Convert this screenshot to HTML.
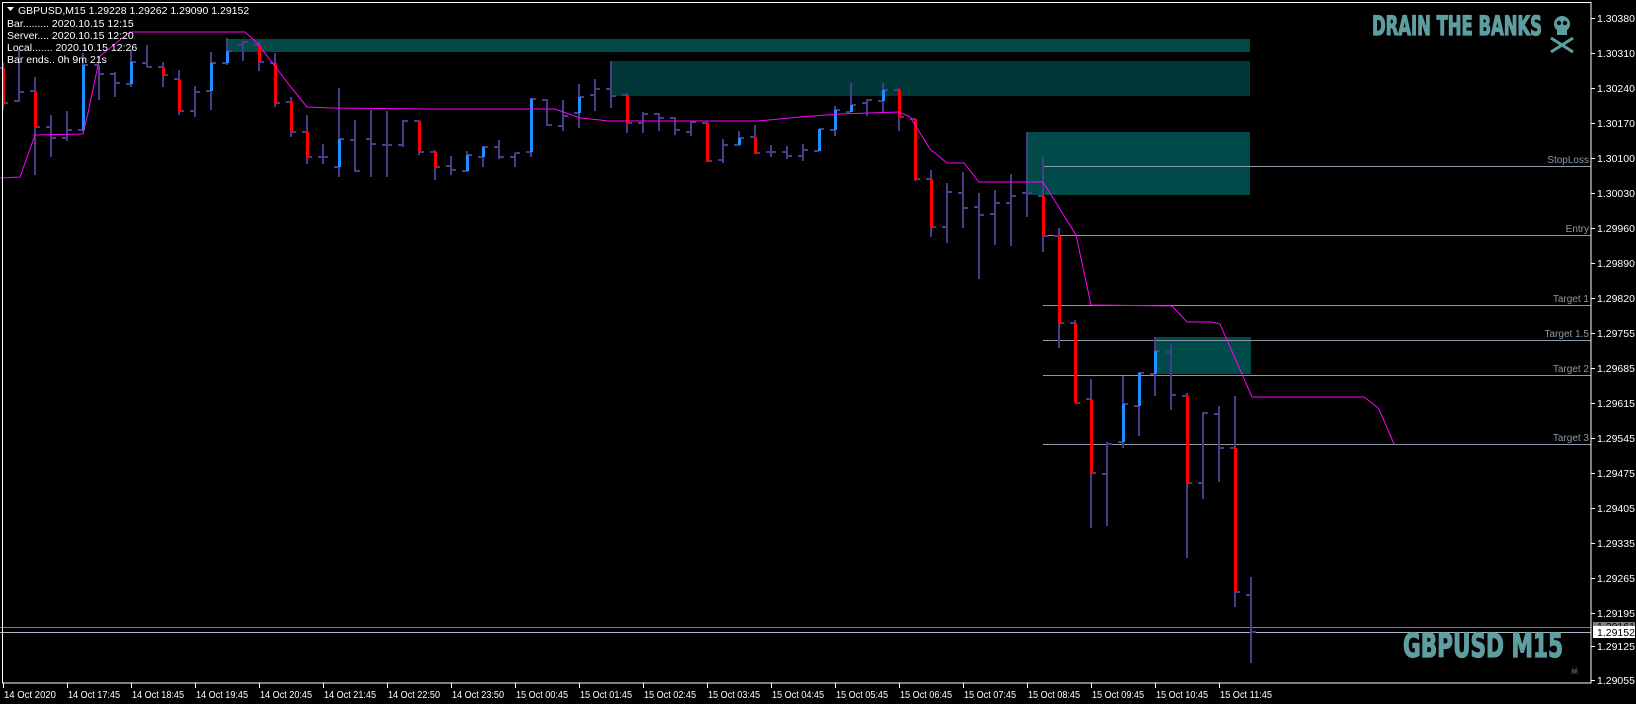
<!DOCTYPE html>
<html><head><meta charset="utf-8"><style>
html,body{margin:0;padding:0;background:#000;width:1636px;height:704px;overflow:hidden}
svg{display:block}
.t{font-family:"Liberation Sans",sans-serif;font-size:10.5px;fill:#fff}
.lb{font-family:"Liberation Sans",sans-serif;font-size:10px;fill:#8a98a8}
.big{font-family:"Liberation Sans Narrow","DejaVu Sans Condensed","Liberation Sans",sans-serif;font-weight:bold;fill:#5f9ea0;stroke:#5f9ea0;stroke-width:1.2}
</style></head><body>
<svg id="c" width="1636" height="704" xmlns="http://www.w3.org/2000/svg">
<rect width="1636" height="704" fill="#000"/>
<g id="boxes">
<rect x="227" y="39" width="1023" height="13" fill="#004a4a"/>
<rect x="611" y="61" width="639" height="35" fill="#003838"/>
<rect x="1027" y="132" width="223" height="63" fill="#004a4a"/>
<rect x="1155" y="337" width="96" height="37" fill="#004a4a"/>
</g>
<g stroke="#8c9aaa" stroke-width="1">
<line x1="1043" y1="166.5" x2="1591" y2="166.5"/>
<line x1="1043" y1="235.5" x2="1591" y2="235.5"/>
<line x1="1043" y1="305.5" x2="1591" y2="305.5"/>
<line x1="1043" y1="340.5" x2="1591" y2="340.5"/>
<line x1="1043" y1="375.5" x2="1591" y2="375.5"/>
<line x1="1043" y1="444.5" x2="1591" y2="444.5"/>
<line x1="0" y1="627.5" x2="1591" y2="627.5" stroke="#808080"/>
<line x1="0" y1="632.5" x2="1591" y2="632.5" stroke="#a8b8c8"/>
</g>
<g text-anchor="end" class="lb">
<text x="1589" y="163">StopLoss</text>
<text x="1589" y="232">Entry</text>
<text x="1589" y="302">Target 1</text>
<text x="1589" y="337">Target 1.5</text>
<text x="1589" y="372">Target 2</text>
<text x="1589" y="441">Target 3</text>
</g>
<g id="bars"></g>
<polyline fill="none" stroke="#ff00ff" stroke-width="1" points="0,178 20,177 35,135 83,134 88,113 100,56 130,32 245,32 258,44 290,86 307,107 332,108 428,109 555,109 580,118 600,120 608,121 758,121 800,117 840,114 899,112 910,117 930,149 947,163 964,163 979,182 1043,182 1076,235 1091,305 1172,306 1187,322 1212,322 1220,324 1252,397 1364,397 1372,403 1379,409 1394,444"/>
<rect x="2.5" y="2.5" width="1588.5" height="680.5" fill="none" stroke="#fff" stroke-width="1"/>
<g class="t">
<path d="M7 7h7l-3.5 4z" fill="#fff"/>
<text x="18" y="14">GBPUSD,M15  1.29228 1.29262 1.29090 1.29152</text>
<text x="7" y="27">Bar......... 2020.10.15 12:15</text>
<text x="7" y="39">Server.... 2020.10.15 12:20</text>
<text x="7" y="51">Local....... 2020.10.15 12:26</text>
<text x="7" y="63">Bar ends.. 0h 9m 21s</text>
</g>
<text class="big" x="1372" y="35" font-size="27" textLength="170" lengthAdjust="spacingAndGlyphs">DRAIN THE BANKS</text>
<g fill="#5f9ea0" stroke="#5f9ea0">
<ellipse cx="1562" cy="24" rx="8" ry="8" stroke="none"/>
<rect x="1557" y="28" width="10" height="7" stroke="none"/>
<circle cx="1559" cy="23" r="2.2" fill="#000" stroke="none"/>
<circle cx="1565" cy="23" r="2.2" fill="#000" stroke="none"/>
<line x1="1551" y1="38" x2="1573" y2="52" stroke-width="3"/>
<line x1="1573" y1="38" x2="1551" y2="52" stroke-width="3"/>
</g>
<text class="big" x="1403" y="657" font-size="33" textLength="160" lengthAdjust="spacingAndGlyphs">GBPUSD M15</text>
<text x="1570" y="674" font-size="10" fill="#808080" font-family="DejaVu Sans,sans-serif">☠</text>
<g id="axis"></g>
</svg>
<script>
var B=[[3,62,110,68,103,'r'],[19,50,102,101,92,'p'],[35,77,175,91,127,'r'],[51,115,157,127,138,'p'],[67,111,141,138,130,'p'],[83,53,132,130,65,'b'],[99,65,100,65,74,'p'],[115,72,97,74,83,'p'],[131,49,87,84,62,'b'],[147,45,67,63,67,'p'],[163,62,87,67,75,'r'],[179,70,115,79,111,'r'],[195,86,117,111,92,'p'],[211,52,110,91,63,'b'],[227,38,65,63,51,'b'],[243,41,61,45,42,'p'],[259,41,71,45,62,'r'],[275,53,107,63,103,'r'],[291,97,137,102,132,'r'],[307,115,164,132,157,'r'],[323,144,164,157,157,'p'],[339,88,177,167,139,'b'],[355,120,172,140,171,'p'],[371,110,177,139,144,'p'],[387,111,177,145,145,'p'],[403,120,147,145,121,'p'],[419,120,155,121,152,'r'],[435,150,180,152,167,'r'],[451,156,175,166,170,'p'],[467,151,172,171,155,'b'],[483,146,167,157,147,'b'],[499,140,159,147,157,'p'],[515,153,167,157,153,'p'],[531,98,157,152,99,'b'],[547,99,126,100,125,'p'],[563,100,131,126,116,'p'],[579,84,128,113,97,'b'],[595,79,111,95,89,'p'],[611,61,108,89,96,'p'],[627,93,133,95,123,'r'],[643,112,133,123,114,'p'],[659,113,131,114,118,'p'],[675,117,135,118,130,'p'],[691,121,136,132,122,'p'],[707,121,162,123,161,'r'],[723,139,163,160,145,'p'],[739,131,146,145,138,'b'],[755,125,154,137,153,'r'],[771,145,157,152,152,'p'],[787,146,159,152,156,'p'],[803,144,161,156,150,'p'],[819,129,151,151,129,'b'],[835,106,136,130,110,'b'],[851,83,112,112,105,'b'],[867,99,116,103,100,'p'],[883,83,113,101,90,'b'],[899,88,131,90,117,'r'],[915,118,181,119,179,'r'],[931,170,237,179,227,'r'],[947,183,243,227,192,'p'],[963,172,228,193,208,'p'],[979,193,279,207,215,'p'],[995,190,245,214,203,'p'],[1011,174,246,203,196,'p'],[1027,132,217,193,193,'p'],[1043,157,252,196,236,'r'],[1059,228,348,236,323,'r'],[1075,320,403,323,403,'r'],[1091,379,528,399,473,'r'],[1107,442,526,474,444,'p'],[1123,376,448,442,404,'b'],[1139,372,436,406,373,'b'],[1155,337,396,374,351,'b'],[1171,344,410,352,395,'p'],[1187,393,558,396,483,'r'],[1203,412,499,483,413,'p'],[1219,406,482,414,448,'p'],[1235,396,607,448,592,'r'],[1251,577,663,595,632,'p']];
var s='',W='#483d8b';
B.forEach(function(b){var x=b[0],h=b[1],l=b[2],o=b[3],c=b[4];
s+='<rect x="'+(x-1)+'" y="'+h+'" width="2" height="'+(l-h)+'" fill="'+W+'"/>';
s+='<rect x="'+(x-5)+'" y="'+(o-1)+'" width="5" height="2" fill="'+W+'"/>';
s+='<rect x="'+(x)+'" y="'+(c-1)+'" width="5" height="2" fill="'+W+'"/>';
if(b[5]!='p'){var t=Math.min(o,c),bt=Math.max(o,c);s+='<rect x="'+(x-1)+'" y="'+t+'" width="3" height="'+(bt-t)+'" fill="'+(b[5]=='r'?'#ff0000':'#1e90ff')+'"/>';}
});
document.getElementById('bars').innerHTML=s;
var P=['1.30380','1.30310','1.30240','1.30170','1.30100','1.30030','1.29960','1.29890','1.29820','1.29755','1.29685','1.29615','1.29545','1.29475','1.29405','1.29335','1.29265','1.29195','1.29125','1.29055'];
var a='';
P.forEach(function(p,k){var y=18+35*k;if(k==18)y=646;if(k==19)y=680;
a+='<line x1="1591" y1="'+(y+.5)+'" x2="1595" y2="'+(y+.5)+'" stroke="#fff"/><text class="t" x="1597" y="'+(y+4)+'">'+p+'</text>';});
a+='<rect x="1593" y="622" width="42" height="9" fill="#808080"/><text class="t" x="1597" y="630" style="fill:#000">1.29161</text>';
a+='<rect x="1593" y="626" width="42" height="12" fill="#fff"/><text class="t" x="1597" y="636" style="fill:#000">1.29152</text>';
var T=['14 Oct 2020','14 Oct 17:45','14 Oct 18:45','14 Oct 19:45','14 Oct 20:45','14 Oct 21:45','14 Oct 22:50','14 Oct 23:50','15 Oct 00:45','15 Oct 01:45','15 Oct 02:45','15 Oct 03:45','15 Oct 04:45','15 Oct 05:45','15 Oct 06:45','15 Oct 07:45','15 Oct 08:45','15 Oct 09:45','15 Oct 10:45','15 Oct 11:45'];
T.forEach(function(t,k){var x=3+64*k;a+='<line x1="'+(x+.5)+'" y1="683" x2="'+(x+.5)+'" y2="688" stroke="#fff"/><text class="t" x="'+(x+1)+'" y="698" font-size="10" textLength="52" lengthAdjust="spacingAndGlyphs">'+t+'</text>';});
document.getElementById('axis').innerHTML=a;
</script>
</body></html>
